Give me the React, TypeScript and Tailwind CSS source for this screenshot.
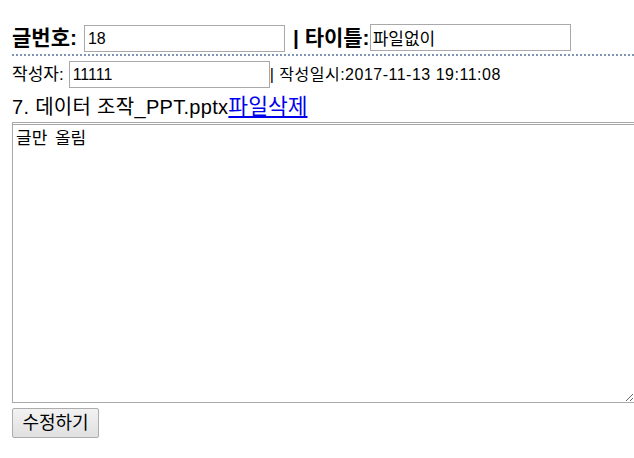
import React from 'react';

const font = { fontFamily: '"Liberation Sans", "Noto Sans CJK KR", sans-serif' };

export default function App() {
  return (
    <div
      className="min-h-[458px] w-[634px] overflow-hidden bg-white pl-3 pt-[22px] text-black"
      style={font}
    >
      <div className="flex items-center border-b-2 border-dotted border-[#7f97b5] pb-[2px]">
        <span className="text-[21px] font-bold leading-none">글번호:</span>
        <input
          className="ml-[7px] mt-[3px] h-[27px] w-[201px] border border-[#a9a9a9] px-[3px] text-[16px] outline-none"
          defaultValue="18"
          style={font}
        />
        <span className="ml-[8px] text-[21px] font-bold leading-none">| 타이틀:</span>
        <input
          className="h-[27px] w-[201px] border border-[#a9a9a9] px-[2px] text-[17px] outline-none"
          defaultValue="파일없이"
          style={font}
        />
      </div>

      <div className="mt-[5px] flex items-center">
        <span className="text-[17px]">작성자:</span>
        <input
          className="ml-[5px] h-[27px] w-[201px] border border-[#a9a9a9] px-[3px] text-[16px] outline-none"
          defaultValue="11111"
          style={font}
        />
        <span className="text-[16px] tracking-[0.5px]">| 작성일시:2017-11-13 19:11:08</span>
      </div>

      <div className="mt-[6px] text-[20px] leading-[26px]">
        <span className="tracking-[0.3px]">7. 데이터 조작_PPT.pptx</span>
        <a href="#" className="text-[21.5px] text-[#0000ee] underline">
          파일삭제
        </a>
      </div>

      <textarea
        className="mt-[2px] block h-[281px] w-[623px] resize border border-t-[3px] border-[#a9a9a9] px-[3px] py-[1px] text-[17px] leading-[21px] outline-none"
        defaultValue="글만  올림"
        style={{ fontFamily: '"Noto Sans CJK KR", monospace', borderTopStyle: 'double' }}
      />

      <button
        className="mt-[5px] h-[30px] w-[87px] rounded-[2px] border border-[#adadad] bg-gradient-to-b from-[#f2f2f2] to-[#e0e0e0] text-[18px] leading-none"
        style={font}
        type="button"
      >
        수정하기
      </button>
    </div>
  );
}
